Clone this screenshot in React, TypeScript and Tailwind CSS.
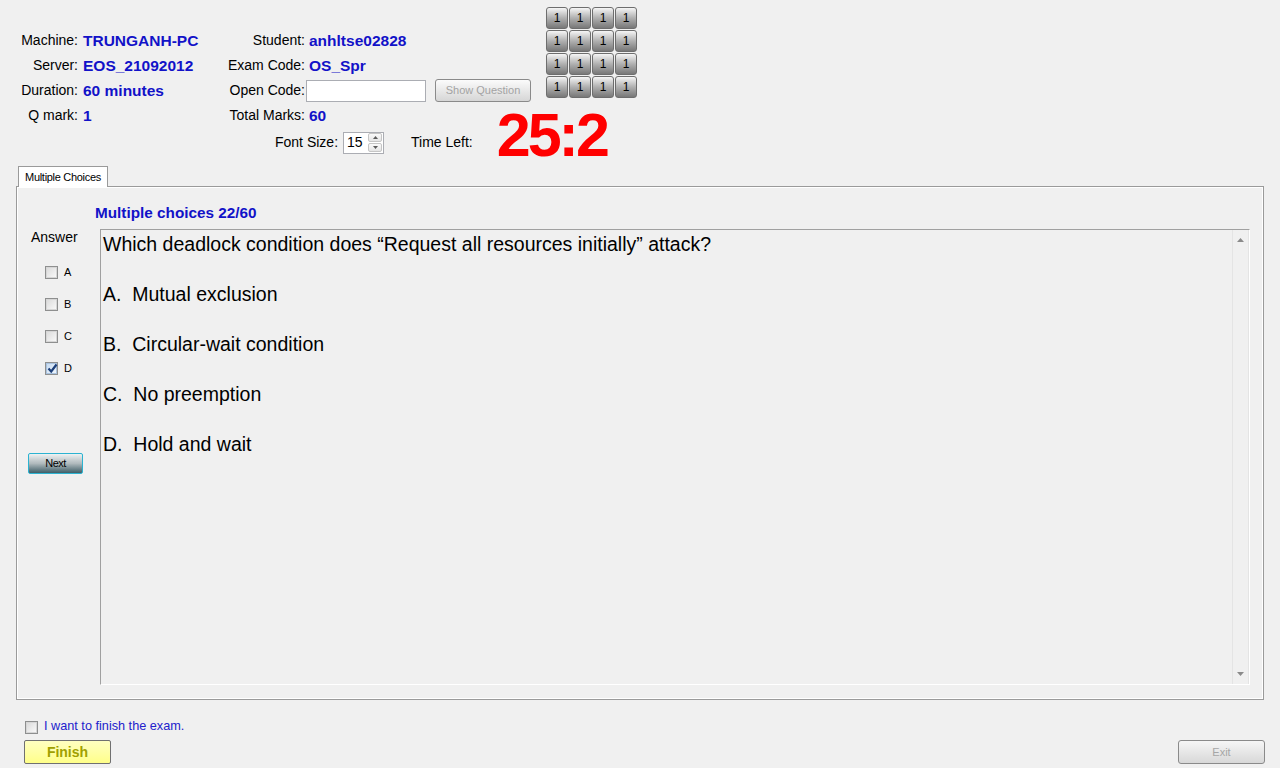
import React from 'react';

const infoRows = [
  { l1: 'Machine:', v1: 'TRUNGANH-PC', l2: 'Student:', v2: 'anhltse02828' },
  { l1: 'Server:', v1: 'EOS_21092012', l2: 'Exam Code:', v2: 'OS_Spr' },
  { l1: 'Duration:', v1: '60 minutes', l2: 'Open Code:', v2: null },
  { l1: 'Q mark:', v1: '1', l2: 'Total Marks:', v2: '60' },
];

const options = ['A', 'B', 'C', 'D'];

const questionLines = [
  'Which deadlock condition does \u201cRequest all resources initially\u201d attack?',
  'A.  Mutual exclusion',
  'B.  Circular-wait condition',
  'C.  No preemption',
  'D.  Hold and wait',
];

function CheckBox({ checked }: { checked?: boolean }) {
  return (
    <span className="flex h-[13px] w-[13px] shrink-0 items-center justify-center border border-[#8e8f8f] bg-white">
      <span
        className={
          checked
            ? 'relative flex h-[11px] w-[11px] items-center justify-center border border-[#a9c2de] bg-linear-to-br from-[#c8dcf2] to-[#eef5fc]'
            : 'h-[11px] w-[11px] border border-[#d6d6d6] bg-linear-to-br from-[#dcdcdc] to-[#f8f8f8]'
        }
      >
        {checked && (
          <svg width="11" height="11" viewBox="0 0 11 11" className="absolute -top-[1px] left-0">
            <path d="M1.5 5.5 L4.2 8.5 L9.5 1.5" fill="none" stroke="#1c3f7a" strokeWidth="2.2" />
          </svg>
        )}
      </span>
    </span>
  );
}

function GridButton() {
  return (
    <div className="flex h-[22px] w-[22px] items-center justify-center rounded-[3px] border border-[#6e6e6e] bg-linear-to-b from-[#f6f6f6] via-[#b0b0b0] to-[#787878] text-[12px] leading-none text-black">
      1
    </div>
  );
}

export default function App() {
  return (
    <div className="h-[768px] w-[1280px] overflow-hidden bg-[#f0f0f0] font-['Liberation_Sans','Arial',sans-serif] text-black">
      {/* header */}
      <div className="flex h-[166px]">
        <div className="w-[545px] shrink-0 pl-[20px] pt-[28px]">
          {infoRows.map((r) => (
            <div key={r.l1} className="flex h-[25px] items-center whitespace-nowrap">
              <span className="w-[58px] shrink-0 text-right text-[14px]">{r.l1}</span>
              <span className="ml-[5px] w-[119px] shrink-0 text-[15.5px] font-bold text-[#1212c8]">{r.v1}</span>
              <span className="w-[103px] shrink-0 text-right text-[14px]">{r.l2}</span>
              {r.v2 ? (
                <span className="ml-[4px] text-[15.5px] font-bold text-[#1212c8]">{r.v2}</span>
              ) : (
                <>
                  <div className="ml-[1px] h-[22px] w-[120px] shrink-0 border border-[#abadb3] bg-white" />
                  <div className="ml-[9px] flex h-[23px] w-[96px] shrink-0 items-center justify-center rounded-[3px] border border-[#8a8a8a] bg-linear-to-b from-[#fbfbfb] to-[#d6d6d6] text-[11px] text-[#a3a3a3]">
                    Show Question
                  </div>
                </>
              )}
            </div>
          ))}
          <div className="ml-[255px] mt-[2px] flex h-[25px] w-max items-center whitespace-nowrap">
            <span className="shrink-0 text-[14px]">Font Size:</span>
            <div className="ml-[5px] flex h-[22px] w-[41px] shrink-0 items-center justify-between border border-[#abadb3] bg-white pl-[3px] pr-[1px]">
              <span className="text-[14px]">15</span>
              <div className="flex flex-col gap-[1px]">
                <div className="flex h-[9px] w-[14px] items-center justify-center rounded-[2px] border border-[#c5c5c5] bg-linear-to-b from-[#fafafa] to-[#e4e4e4]">
                  <svg width="5" height="3" viewBox="0 0 5 3">
                    <path d="M0 3 L2.5 0 L5 3 Z" fill="#5a5a5a" />
                  </svg>
                </div>
                <div className="flex h-[9px] w-[14px] items-center justify-center rounded-[2px] border border-[#c5c5c5] bg-linear-to-b from-[#fafafa] to-[#e4e4e4]">
                  <svg width="5" height="3" viewBox="0 0 5 3">
                    <path d="M0 0 L2.5 3 L5 0 Z" fill="#5a5a5a" />
                  </svg>
                </div>
              </div>
            </div>
            <span className="ml-[27px] shrink-0 text-[14px]">Time Left:</span>
            <span className="-mt-[14px] ml-[24px] shrink-0 text-[61px] font-bold leading-none tracking-[-3px] text-[#ff0000]">
              25:2
            </span>
          </div>
        </div>
        <div className="ml-[1px] pt-[7px]">
          <div className="grid grid-cols-4 gap-[1px]">
            {Array.from({ length: 16 }).map((_, i) => (
              <GridButton key={i} />
            ))}
          </div>
        </div>
      </div>

      {/* tab control */}
      <div className="ml-[16px] w-[1248px]">
        <div className="relative z-10 -mb-[1px] ml-[2px] flex h-[21px] w-[90px] items-center justify-center border border-b-0 border-[#9a9a9a] bg-white text-[11px] tracking-[-0.3px]">
          Multiple Choices
        </div>
        <div className="h-[514px] border border-[#9a9a9a]">
          <div className="h-full border border-white">
            <div className="pl-[77px] pt-[17px] text-[15.3px] font-bold leading-[16px] text-[#1212c8]">
              Multiple choices 22/60
            </div>
            <div className="mt-[8px] flex">
              <div className="w-[82px] shrink-0">
                <div className="pl-[13px] text-[14px] leading-[16px]">Answer</div>
                <div className="mt-[11px] pl-[27px]">
                  {options.map((o) => (
                    <div key={o} className="flex h-[32px] items-center gap-[6px]">
                      <CheckBox checked={o === 'D'} />
                      <span className="text-[11px]">{o}</span>
                    </div>
                  ))}
                </div>
                <div className="ml-[10px] mt-[69px] flex h-[21px] w-[55px] items-center justify-center rounded-[2px] border border-[#2bb3d1] bg-linear-to-b from-[#eef2f3] via-[#b0babd] to-[#3f5f68] text-[11px] tracking-[-0.5px] text-black">
                  Next
                </div>
              </div>
              <div className="mr-[12px] flex h-[456px] flex-1 border border-b-white border-l-[#a0a0a0] border-r-white border-t-[#a0a0a0]">
                <div className="flex-1 pl-[2px] pt-[2px] text-[19.5px] leading-[25px]">
                  {questionLines.map((line) => (
                    <div key={line} className="mb-[25px] whitespace-pre">
                      {line}
                    </div>
                  ))}
                </div>
                <div className="flex w-[17px] flex-col items-center justify-between border-x border-[#e4e4e4] py-[8px]">
                  <svg width="7" height="4" viewBox="0 0 7 4">
                    <path d="M0 4 L3.5 0 L7 4 Z" fill="#8a8a8a" />
                  </svg>
                  <svg width="7" height="4" viewBox="0 0 7 4">
                    <path d="M0 0 L3.5 4 L7 0 Z" fill="#8a8a8a" />
                  </svg>
                </div>
              </div>
            </div>
          </div>
        </div>
      </div>

      {/* footer */}
      <div className="ml-[25px] mt-[19px] flex h-[16px] items-center gap-[6px]">
        <CheckBox />
        <span className="text-[12.7px] text-[#2222cc]">I want to finish the exam.</span>
      </div>
      <div className="mt-[5px] flex justify-between pl-[24px] pr-[15px]">
        <div className="flex h-[24px] w-[87px] items-center justify-center rounded-[2px] border border-[#707070] bg-linear-to-b from-[#ffffc0] to-[#ffff88] text-[14px] font-bold text-[#a0a000]">
          Finish
        </div>
        <div className="flex h-[24px] w-[87px] items-center justify-center rounded-[3px] border border-[#8a8a8a] bg-linear-to-b from-[#f6f6f6] to-[#d8d8d8] text-[11px] text-[#a6a6a6]">
          Exit
        </div>
      </div>
    </div>
  );
}
